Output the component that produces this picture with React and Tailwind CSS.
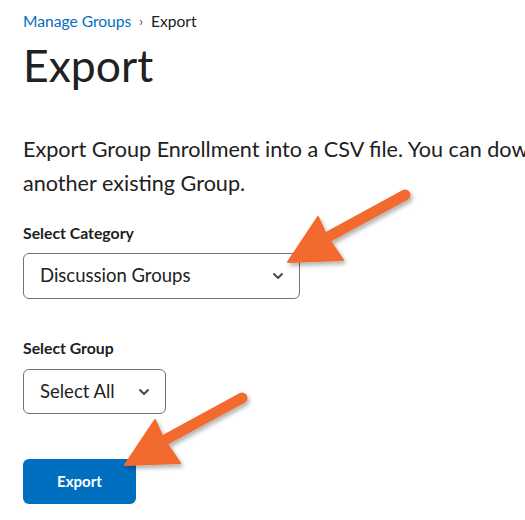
import React from 'react';

const Chevron = () => (
  <svg width="12" height="8" viewBox="0 0 12 8" fill="none" className="shrink-0">
    <path d="M2 2l4 4 4-4" stroke="#494c4e" strokeWidth="2" strokeLinecap="round" strokeLinejoin="round" />
  </svg>
);

const Arrow = ({ x, y }) => (
  <g transform={`translate(${x} ${y})`}>
    <line x1="38" y1="-24" x2="117" y2="-67" stroke="#f26a2e" strokeWidth="11" strokeLinecap="round" />
    <path d="M0 0 L30 -45 L38 -27 L55 -2 Z" fill="#f26a2e" strokeLinejoin="round" stroke="#f26a2e" strokeWidth="2" />
  </g>
);

export default function App() {
  return (
    <div className="relative w-[525px] h-[520px] bg-white overflow-hidden font-['Lato','Noto_Sans',sans-serif] text-[#202122]">
      <div className="pl-[23px] pt-[11px]">
        <nav className="flex items-center gap-[8px] text-[15.6px] leading-[20px]">
          <span className="text-[#006fbf]">Manage Groups</span>
          <span className="text-[#494c4e] text-[13px]">›</span>
          <span>Export</span>
        </nav>
        <h1 className="mt-[6px] text-[44.5px] leading-[56px] font-normal">Export</h1>

        <p className="mt-[39px] text-[21.6px] leading-[34px] whitespace-nowrap">
          Export Group Enrollment into a CSV file. You can download the file and re-upload it to
          <br />
          another existing Group.
        </p>

        <label className="block mt-[23px] text-[15.8px] leading-[20px] font-bold">Select Category</label>
        <div className="mt-[10px] w-[277px] h-[46px] rounded-[6px] border border-[#6e7376] flex items-center justify-between pl-[16px] pr-[15px] text-[18.5px]">
          <span>Discussion Groups</span>
          <Chevron />
        </div>

        <label className="block mt-[39px] text-[15.8px] leading-[20px] font-bold">Select Group</label>
        <div className="mt-[11px] w-[143px] h-[45px] rounded-[6px] border border-[#6e7376] flex items-center justify-between pl-[16px] pr-[15px] text-[18.5px]">
          <span>Select All</span>
          <Chevron />
        </div>

        <button className="mt-[45px] w-[113px] h-[45px] rounded-[6px] bg-[#006fbf] text-white text-[15px] font-bold">
          Export
        </button>
      </div>

      <svg className="absolute inset-0 pointer-events-none" width="525" height="520" viewBox="0 0 525 520">
        <defs>
          <filter id="sh" x="-20%" y="-20%" width="140%" height="140%">
            <feDropShadow dx="2" dy="3" stdDeviation="2" floodColor="#000" floodOpacity="0.3" />
          </filter>
        </defs>
        <g filter="url(#sh)">
          <Arrow x={288} y={262} />
          <Arrow x={125} y={465} />
        </g>
      </svg>
    </div>
  );
}
